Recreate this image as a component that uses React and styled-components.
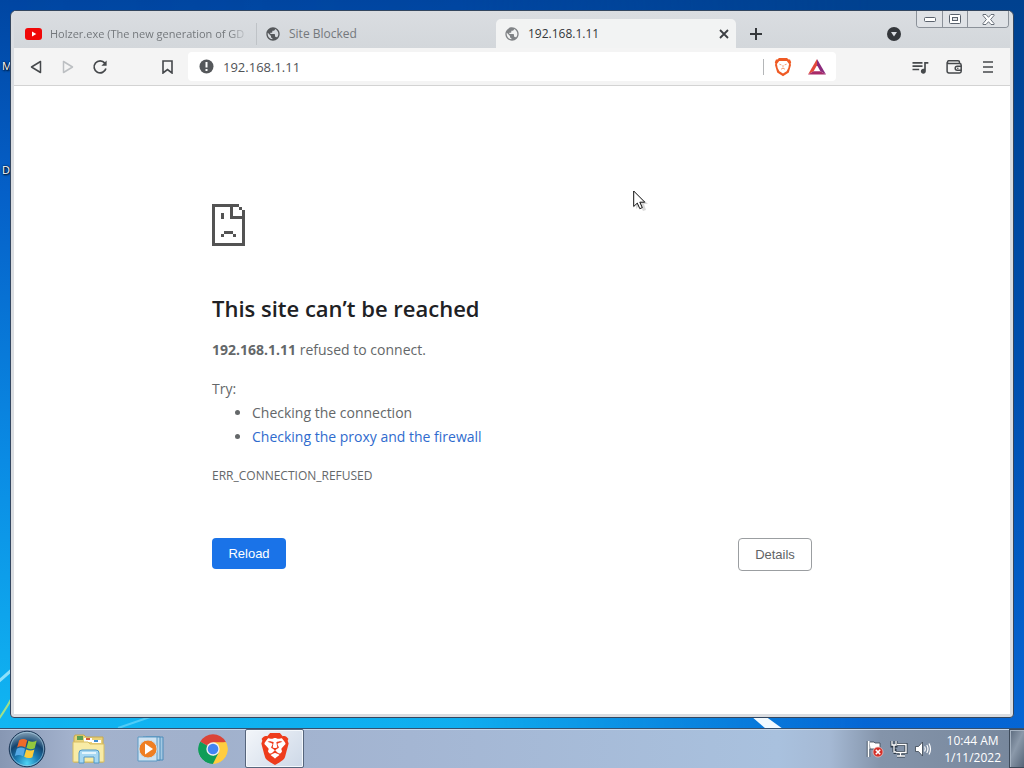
import React, { useState } from "react";
import styled, { createGlobalStyle } from "styled-components";
import { MdPublic, MdQueueMusic } from "react-icons/md";
import { SiBrave } from "react-icons/si";

const GlobalStyle = createGlobalStyle`
  * {
    box-sizing: border-box;
  }

  body {
    margin: 0;
    font-family: "Open Sans", "Noto Sans", sans-serif;
  }

  button,
  input {
    font: inherit;
  }
`;

// Desktop
const Desktop = styled.div`
  position: relative;
  display: flex;
  flex-direction: column;
  min-height: 100vh;
  overflow: hidden;
  background: #0050b4;
`;

const Wallpaper = styled.svg`
  position: absolute;
  inset: 0;
  width: 100%;
  height: 100%;
`;

const DesktopLabel = styled.span`
  position: absolute;
  left: 2px;
  top: ${({ $top }) => $top}px;
  color: #fff;
  font-size: 11px;
  line-height: 16px;
  text-shadow: 1px 1px 2px #000, 0 0 2px #000;
`;

const Stage = styled.div`
  position: relative;
  flex: 1;
  display: flex;
  padding: 10px;
`;

// Browser window
const Window = styled.div`
  flex: 1;
  min-width: 0;
  display: flex;
  flex-direction: column;
  padding: 0 3px 3px;
  border: 1px solid #33465f;
  border-radius: 6px 6px 4px 4px;
  background: #dadde1;
`;

const TabStrip = styled.div`
  display: flex;
  align-items: flex-end;
  height: 37px;
  padding-left: 3px;
  background: linear-gradient(#dadde1, #d3d7db);
`;

const Tab = styled.div`
  flex: 0 1 ${({ $active }) => ($active ? 240 : 239)}px;
  min-width: 0;
  display: flex;
  align-items: center;
  gap: 8px;
  height: 29px;
  padding: 0 7px 0 8px;
  border-radius: 5px 5px 0 0;
  background: ${({ $active }) => ($active ? "#f2f3f3" : "transparent")};
  color: ${({ $active }) => ($active ? "#333639" : "#74787c")};

  svg {
    flex: none;
  }
`;

const TabDivider = styled.span`
  width: 1px;
  height: 22px;
  margin-bottom: 3px;
  background: #bfc3c7;
`;

const TabTitle = styled.button`
  flex: 1;
  min-width: 0;
  padding: 0;
  border: 0;
  background: none;
  color: inherit;
  font-size: ${({ $fade }) => ($fade ? 11 : 12)}px;
  line-height: 18px;
  text-align: left;
  white-space: nowrap;
  overflow: hidden;
  mask-image: ${({ $fade }) =>
    $fade ? "linear-gradient(90deg, #000 90%, transparent)" : "none"};
`;

const IconButton = styled.button`
  flex: none;
  display: grid;
  place-items: center;
  width: ${({ $w }) => $w || 32}px;
  height: 28px;
  padding: 0;
  border: 0;
  background: none;
  color: ${({ $muted }) => ($muted ? "#bcbfc2" : "#45484b")};
`;

const Spacer = styled.div`
  flex: 1;
`;

const WindowControls = styled.div`
  flex: none;
  align-self: flex-start;
  display: flex;
  height: 17px;
  margin: 0 1px 0 6px;
  border: 1px solid #8b9199;
  border-top: 0;
  border-radius: 0 0 4px 4px;
`;

const ControlButton = styled.button`
  display: grid;
  place-items: center;
  width: ${({ $w }) => $w}px;
  height: 16px;
  padding: 0;
  border: 0;
  background: #dfe2e6;

  & + & {
    border-left: 1px solid #8b9199;
  }

  &:first-child {
    border-radius: 0 0 0 3px;
  }

  &:last-child {
    border-radius: 0 0 3px 0;
  }
`;

const Toolbar = styled.div`
  display: flex;
  align-items: center;
  height: 38px;
  padding: 0 5px 0 6px;
  border-bottom: 1px solid #d3d3d3;
  background: #f4f4f4;
`;

const BookmarkSlot = styled.div`
  margin: 0 5px 0 35px;
`;

const AddressBar = styled.form`
  flex: 1;
  min-width: 0;
  display: flex;
  align-items: center;
  height: 29px;
  padding: 0 2px 0 11px;
  border-radius: 4px;
  background: #fff;

  label {
    display: flex;
  }
`;

const AddressInput = styled.input`
  flex: 1;
  min-width: 0;
  padding: 0 9px;
  border: 0;
  outline: 0;
  background: none;
  color: #505356;
  font-size: 13px;
  line-height: 20px;
`;

const AddressDivider = styled.span`
  width: 1px;
  height: 16px;
  margin-right: 2px;
  background: #b4b6b8;
`;

const ToolbarEnd = styled.div`
  display: flex;
  margin-left: 67px;
`;

// Error page
const Page = styled.main`
  flex: 1;
  padding: 118px 24px 24px;
  background: #fff;
  color: #646769;
  font-size: 14px;
  line-height: 24px;
`;

const ErrorContent = styled.div`
  max-width: 600px;
  margin: 0 auto;

  > svg {
    display: block;
  }
`;

const Title = styled.h1`
  margin: 47px 0 15px;
  color: #202124;
  font-size: 22px;
  font-weight: 600;
  line-height: 30px;
`;

const Paragraph = styled.p`
  margin: 0 0 15px;
`;

const Suggestions = styled.div`
  ul {
    margin: 0;
    padding-left: 40px;
  }

  a {
    color: #2f6bce;
    text-decoration: none;
  }
`;

const ErrorCode = styled.div`
  margin-top: 18px;
  font-size: 12px;
  line-height: 18px;
`;

const Actions = styled.div`
  display: flex;
  align-items: flex-start;
  justify-content: space-between;
  margin-top: 53px;
`;

const ActionButton = styled.button`
  min-width: 74px;
  height: ${({ $primary }) => ($primary ? 31 : 33)}px;
  padding: 0 15px;
  border: ${({ $primary }) => ($primary ? "0" : "1px solid #9b9ea1")};
  border-radius: 4px;
  background: ${({ $primary }) => ($primary ? "#1a73e8" : "#fff")};
  color: ${({ $primary }) => ($primary ? "#fff" : "#606366")};
  font-family: "Liberation Sans", Arial, sans-serif;
  font-size: 13px;
`;

// Taskbar
const Taskbar = styled.footer`
  position: relative;
  display: flex;
  height: 40px;
  border-top: 1px solid #35506f;
  box-shadow: inset 0 1px 0 #c8d8ea;
  background: linear-gradient(
    90deg,
    #8797b3 0,
    #a3b2cd 7%,
    #a1b1cc 20%,
    #a4b6d3 40%,
    #a9c1de 76%,
    #a5b9d4 81%,
    #8494aa 86%,
    #76869b 100%
  );
`;

const StartButton = styled.button`
  width: 54px;
  margin-right: 5px;
  padding: 0;
  border: 0;
  background: none;

  svg {
    display: block;
    margin: 0 auto;
  }
`;

const TaskButtons = styled.div`
  flex: 1;
  display: flex;
  gap: 3px;
`;

const TaskButton = styled.button`
  display: grid;
  place-items: center;
  width: 59px;
  padding: 0;
  border: 1px solid ${({ $active }) => ($active ? "#56657c" : "transparent")};
  border-radius: 2px;
  background: ${({ $active }) =>
    $active ? "linear-gradient(135deg, #f3f6fa, #cdd8e7)" : "none"};
  box-shadow: ${({ $active }) => ($active ? "inset 0 0 0 1px #f4f8fc" : "none")};
`;

const Tray = styled.div`
  display: flex;
  align-items: center;
  gap: 1px;
`;

const TrayButton = styled(IconButton)`
  width: 23px;
`;

const Clock = styled.time`
  margin: 0 8px 0 9px;
  color: #fff;
  font-size: 12px;
  line-height: 17px;
  text-align: center;
`;

const ShowDesktop = styled.button`
  width: 15px;
  padding: 0;
  border: 1px solid #3d4a5a;
  border-right: 0;
  background: linear-gradient(115deg, #5b6a7d, #8b99aa 45%, #566578);
  box-shadow: inset 1px 1px 0 #a6b3c2;
`;

const Pointer = styled.svg`
  position: absolute;
  left: 633px;
  top: 190px;
  pointer-events: none;
`;

const DesktopBackground = () => (
  <Wallpaper viewBox="0 0 1024 768" preserveAspectRatio="none" aria-hidden="true">
    <defs>
      <linearGradient id="left" x1="0" y1="0" x2="0" y2="1">
        <stop offset="0" stopColor="#0046a2" />
        <stop offset=".25" stopColor="#0560c8" />
        <stop offset=".6" stopColor="#0a8be4" />
        <stop offset="1" stopColor="#12bdf4" />
      </linearGradient>
      <linearGradient id="right" x1="0" y1="0" x2="0" y2="1">
        <stop offset="0" stopColor="#00418f" />
        <stop offset=".5" stopColor="#0050b0" />
        <stop offset="1" stopColor="#0668d8" />
      </linearGradient>
      <linearGradient id="fade" x1="0" y1="0" x2="1" y2="0">
        <stop offset="0" stopColor="#fff" stopOpacity="0" />
        <stop offset=".45" stopColor="#fff" stopOpacity=".1" />
        <stop offset=".85" stopColor="#fff" />
      </linearGradient>
      <mask id="rightMask">
        <rect width="1024" height="768" fill="url(#fade)" />
      </mask>
    </defs>
    <rect width="1024" height="768" fill="url(#left)" />
    <rect width="1024" height="768" fill="url(#right)" mask="url(#rightMask)" />
    <path d="M-2 682L14 668" stroke="#8fe0fa" strokeWidth="3" />
    <path d="M-2 720Q8 706 14 694" stroke="#9fe08a" strokeWidth="2" fill="none" />
    <path d="M118 728L150 717" stroke="#4fccf8" strokeWidth="2" />
    <path d="M751 716h14l18 13h-17z" fill="#f2faff" />
  </Wallpaper>
);

const YoutubeIcon = () => (
  <svg width="17" height="12" viewBox="0 0 17 12">
    <rect width="17" height="12" rx="3" fill="#f00808" />
    <path d="M7 3.4v5.2L11.3 6z" fill="#fff" />
  </svg>
);

const CloseIcon = () => (
  <svg width="10" height="10" viewBox="0 0 10 10">
    <path d="M1 1l8 8M9 1L1 9" stroke="#3c3f43" strokeWidth="1.8" />
  </svg>
);

const ReloadIcon = () => (
  <svg width="16" height="16" viewBox="0 0 16 16" fill="none">
    <path d="M12.8 4.1A6 6 0 1 0 13.9 9.5" stroke="currentColor" strokeWidth="1.7" />
    <path d="M14.6 1.6v5.2H9.4z" fill="currentColor" />
  </svg>
);

const ShieldIcon = () => (
  <svg width="18" height="20" viewBox="0 0 18 20">
    <path
      d="M5 1h8l1.6 1.6 1.4-.1 1.2 2.8-.6 1.5.4 1.2-2.2 7.4L9 19.2l-5.8-3.8L1 8l.4-1.2-.6-1.5L2 2.5l1.4.1z"
      fill="#ef5a24"
    />
    <path
      d="M5.2 4h7.6l2.3 3-.8 4-1.7 3.2L9 16.6l-3.6-2.4L3.700 11l-.8-4z"
      fill="#fff"
    />
    <path
      d="M5.400 7.200l2 .7M12.600 7.200l-2 .7M9 8v2.400M7 12.200l2-1 2 1"
      stroke="#f5a27c"
      strokeWidth="1"
      fill="none"
    />
  </svg>
);

const RewardsIcon = () => (
  <svg width="18" height="16" viewBox="0 0 18 16">
    <path d="M9 0L0 15.5l5.6-3.3L9 6.2z" fill="#e3493b" />
    <path d="M9 0l9 15.5-5.6-3.3L9 6.2z" fill="#8b2a7c" />
    <path d="M0 15.5h18l-5.6-3.3H5.6z" fill="#a82a68" />
  </svg>
);

const WalletIcon = () => (
  <svg width="17" height="14" viewBox="0 0 17 14" fill="none">
    <path
      d="M13.500 3.500V2.300a1.500 1.500 0 0 0-1.500-1.500H2.500a1.400 1.400 0 0 0 0 2.700h11a1.700 1.700 0 0 1 1.700 1.700v6a1.700 1.700 0 0 1-1.700 1.700H2.800A1.700 1.700 0 0 1 1.100 11.200V2.200"
      stroke="currentColor"
      strokeWidth="1.500"
    />
    <path d="M15.200 6.200h-4a2 2 0 0 0 0 4h4" stroke="currentColor" strokeWidth="1.500" />
    <circle cx="11.800" cy="8.200" r=".8" fill="currentColor" />
  </svg>
);

const SadPageIcon = () => (
  <svg width="33" height="42" viewBox="0 0 11 14" shapeRendering="crispEdges" aria-hidden="true">
    <path
      d="M0 0h9v1H7v3h3V2h1v12H0zM1 1v12h9V5H6V1zM9 1h1v1H9zM3 3h1v2H3zM4 9h3v1H4zM3 10h1v1H3zM7 10h1v1H7z"
      fill="#535353"
      fillRule="evenodd"
    />
  </svg>
);

const StartOrb = () => (
  <svg width="38" height="38" viewBox="0 0 38 38">
    <defs>
      <radialGradient id="orb" cx=".5" cy=".9" r=".9">
        <stop offset="0" stopColor="#4fd4f4" />
        <stop offset=".35" stopColor="#1c7db4" />
        <stop offset=".65" stopColor="#13446f" />
        <stop offset="1" stopColor="#8ea9bd" />
      </radialGradient>
    </defs>
    <circle cx="19" cy="19" r="17.8" fill="url(#orb)" stroke="#1d3858" />
    <circle cx="19" cy="19" r="16.6" fill="none" stroke="#a9cfe4" strokeOpacity=".6" />
    <path d="M11.2 10.2q4-2.6 8 0l-1.9 7.4q-4.2-2.4-8.2-.2z" fill="#ee6a2a" />
    <path d="M20.4 10.8q4.2 2.2 8.3-.2l-2 7.6q-4.2 2-8.2-.2z" fill="#93c83e" />
    <path d="M8.8 18.8q4.2-2.4 8.2 0l-2 7.4q-4-2.2-8.2-.2z" fill="#55a9e6" />
    <path d="M18.2 19.4q4.2 2.2 8.2.2l-2 7.6q-4.2 2-8.2-.4z" fill="#fccb3a" />
  </svg>
);

const ExplorerIcon = () => (
  <svg width="34" height="32" viewBox="0 0 34 32">
    <path d="M2 4l1-2h9l2 2h17v25H2z" fill="#e9d27a" stroke="#c7a94e" />
    <path d="M5 3h6v4H5z" fill="#5c9f53" />
    <path d="M12 5h8v4h-8z" fill="#fff" />
    <path d="M14 5h4v2h-4z" fill="#d65b3c" />
    <path d="M20 7h9v3h-9z" fill="#fff" />
    <path d="M22 7h4v2h-4z" fill="#3f8ed0" />
    <path d="M1 9h15l2 2h14v18H1z" fill="#f8eba6" stroke="#d7bd62" />
    <path d="M7 30V20q0-3 3-3h14q3 0 3 3v10h-5v-6H12v6z" fill="#a7d8f2" stroke="#5098c8" />
    <path d="M10 20h14" stroke="#e3f5fd" strokeWidth="2" />
  </svg>
);

const MediaPlayerIcon = () => (
  <svg width="30" height="28" viewBox="0 0 30 28">
    <path d="M10 2h17v23H10z" fill="#a3c8e2" stroke="#4c8cba" />
    <path d="M7 2h17v23H7z" fill="#bddaee" stroke="#4c8cba" />
    <path d="M2 2h19v24H2z" fill="#cfe3f2" stroke="#5d9ac4" />
    <circle cx="12" cy="14" r="9" fill="#ef7f24" stroke="#c9dbe8" />
    <path d="M9 8.5v11l8-5.5z" fill="#fff" />
  </svg>
);

const ChromeIcon = () => (
  <svg width="32" height="32" viewBox="0 0 48 48">
    <path d="M24 24L4.95 13A22 22 0 0 1 43.05 13z" fill="#db4437" />
    <path d="M24 24V46A22 22 0 0 1 4.95 13z" fill="#0f9d58" />
    <path d="M24 24l19.05-11A22 22 0 0 1 24 46z" fill="#ffcd40" />
    <path d="M24 14h19.6L43 13H24z" fill="#db4437" />
    <path d="M24 14h19.5A22 22 0 0 1 24 46l8.7-17z" fill="#ffcd40" />
    <path d="M4.95 13l10.4 16L24 34l8.7-5L24 46A22 22 0 0 1 4.95 13z" fill="#0f9d58" />
    <circle cx="24" cy="24" r="10" fill="#f1f1f1" />
    <circle cx="24" cy="24" r="8" fill="#4285f4" />
  </svg>
);

const LionIcon = () => (
  <svg width="32" height="32" viewBox="0 0 32 32">
    <path d="M9 3h14l5 4-3 17-9 6-9-6L4 7z" fill="#fff" />
    <SiBrave x="0" y="0" size={32} color="#ee3c1c" />
  </svg>
);

const FlagIcon = () => (
  <svg width="18" height="18" viewBox="0 0 18 18">
    <path d="M3 2h5l1 1h5v7H9L8 9H4z" fill="#fff" stroke="#38434f" strokeWidth=".8" />
    <path d="M2.5 1v16" stroke="#fff" strokeWidth="2" />
    <path d="M1.2 1v16M3.8 9v8" stroke="#38434f" strokeWidth=".7" />
    <circle cx="12" cy="12" r="5" fill="#d42f28" stroke="#f4c9c5" strokeWidth=".7" />
    <path d="M9.8 9.8l4.4 4.4m0-4.4l-4.4 4.4" stroke="#fff" strokeWidth="1.6" />
  </svg>
);

const NetworkIcon = () => (
  <svg width="18" height="18" viewBox="0 0 18 18" fill="none">
    <path d="M6 4.5h10v8H5V9M10.5 13v3M7 16h8" stroke="#2d3a48" strokeWidth="3" />
    <path d="M2 1v5h4V1M4 6v6" stroke="#2d3a48" strokeWidth="3" />
    <path d="M7 4.5h9v8H6M10.5 13v3M7 16h8" stroke="#fff" strokeWidth="1.4" />
    <path d="M2 1v4h4V1M4 5v7h2" stroke="#fff" strokeWidth="1.3" />
  </svg>
);

const VolumeIcon = () => (
  <svg width="18" height="18" viewBox="0 0 18 18" fill="none">
    <path d="M1.5 6.5h3l4-4.5v14l-4-4.5h-3z" fill="#fff" stroke="#38434f" strokeWidth=".8" />
    <path
      d="M10.5 6.5q1.5 2.5 0 5M12.8 5q2.4 4 0 8M15 3.5q3 5.5 0 11"
      stroke="#fff"
      strokeWidth="1.2"
    />
  </svg>
);

const tabs = [
  { title: "Holzer.exe (The new generation of GD", icon: <YoutubeIcon />, fade: true },
  { title: "Site Blocked", icon: <MdPublic size={16} color="#55585b" /> },
  { title: "192.168.1.11", icon: <MdPublic size={16} color="#808386" />, active: true },
];

const taskItems = [
  { name: "Windows Explorer", icon: <ExplorerIcon /> },
  { name: "Windows Media Player", icon: <MediaPlayerIcon /> },
  { name: "Google Chrome", icon: <ChromeIcon /> },
  { name: "Brave", icon: <LionIcon />, active: true },
];

const BrowserTabs = () => (
  <TabStrip>
    {tabs.map((tab, index) => (
      <React.Fragment key={tab.title}>
        {index === 1 && <TabDivider />}
        <Tab $active={tab.active}>
          {tab.icon}
          <TabTitle $fade={tab.fade}>{tab.title}</TabTitle>
          {tab.active && (
            <IconButton $w={10} aria-label="Close tab">
              <CloseIcon />
            </IconButton>
          )}
        </Tab>
      </React.Fragment>
    ))}
    <IconButton $w={40} aria-label="New tab">
      <svg width="12" height="12" viewBox="0 0 12 12">
        <path d="M6 0v12M0 6h12" stroke="#35383b" strokeWidth="2" />
      </svg>
    </IconButton>
    <Spacer />
    <IconButton aria-label="Search tabs">
      <svg width="14" height="14" viewBox="0 0 14 14">
        <circle cx="7" cy="7" r="7" fill="#34373b" />
        <path d="M4 5h6L7 9.5z" fill="#dadde1" />
      </svg>
    </IconButton>
    <WindowControls>
      <ControlButton $w={25} aria-label="Minimize">
        <svg width="12" height="6" viewBox="0 0 12 6">
          <rect x=".5" y="1.5" width="11" height="4" rx="1" fill="#fff" stroke="#5a626d" />
        </svg>
      </ControlButton>
      <ControlButton $w={25} aria-label="Restore">
        <svg width="12" height="10" viewBox="0 0 12 10">
          <rect x=".5" y=".5" width="11" height="9" rx="1" fill="#fff" stroke="#5a626d" />
          <rect x="3.5" y="3.5" width="5" height="3" fill="#dfe2e6" stroke="#5a626d" />
        </svg>
      </ControlButton>
      <ControlButton $w={41} aria-label="Close">
        <svg width="13" height="11" viewBox="0 0 13 11">
          <path
            d="M1 .5h3l2.5 2.8L9 .5h3v1L8.6 5.5 12 9.5v1H9L6.5 7.7 4 10.5H1v-1l3.4-4L1 1.5z"
            fill="#fff"
            stroke="#5a626d"
            strokeWidth=".9"
          />
        </svg>
      </ControlButton>
    </WindowControls>
  </TabStrip>
);

const BrowserToolbar = () => {
  const [address, setAddress] = useState("192.168.1.11");

  return (
    <Toolbar>
      <IconButton aria-label="Back">
        <svg width="12" height="14" viewBox="0 0 12 14">
          <path
            d="M10.5 1.5v11L1.5 7z"
            fill="none"
            stroke="currentColor"
            strokeWidth="1.5"
            strokeLinejoin="round"
          />
        </svg>
      </IconButton>
      <IconButton $muted aria-label="Forward">
        <svg width="12" height="14" viewBox="0 0 12 14">
          <path
            d="M1.5 1.5v11l9-5.5z"
            fill="none"
            stroke="currentColor"
            strokeWidth="1.5"
            strokeLinejoin="round"
          />
        </svg>
      </IconButton>
      <IconButton aria-label="Reload page">
        <ReloadIcon />
      </IconButton>
      <BookmarkSlot>
        <IconButton aria-label="Bookmark this page">
          <svg width="11" height="14" viewBox="0 0 11 14">
            <path
              d="M1 1h9v12L5.5 9.5 1 13z"
              fill="none"
              stroke="currentColor"
              strokeWidth="1.6"
            />
          </svg>
        </IconButton>
      </BookmarkSlot>
      <AddressBar onSubmit={(e) => e.preventDefault()}>
        <label htmlFor="address" aria-label="Address">
          <svg width="15" height="15" viewBox="0 0 15 15">
            <circle cx="7.5" cy="7.5" r="7" fill="#55585b" />
            <path d="M7.5 3v5.5M7.5 10v2" stroke="#fff" strokeWidth="2" />
          </svg>
        </label>
        <AddressInput
          id="address"
          value={address}
          onChange={(e) => setAddress(e.target.value)}
        />
        <AddressDivider />
        <IconButton $w={34} type="button" aria-label="Brave Shields">
          <ShieldIcon />
        </IconButton>
        <IconButton $w={34} type="button" aria-label="Brave Rewards">
          <RewardsIcon />
        </IconButton>
      </AddressBar>
      <ToolbarEnd>
        <IconButton $w={34} aria-label="Media">
          <MdQueueMusic size={20} />
        </IconButton>
        <IconButton $w={34} aria-label="Wallet">
          <WalletIcon />
        </IconButton>
        <IconButton $w={34} aria-label="Menu">
          <svg width="10" height="12" viewBox="0 0 10 12">
            <path d="M0 1h10M0 6h10M0 11h10" stroke="currentColor" strokeWidth="1.5" />
          </svg>
        </IconButton>
      </ToolbarEnd>
    </Toolbar>
  );
};

const ErrorPage = () => (
  <Page>
    <ErrorContent>
      <SadPageIcon />
      <Title>This site can’t be reached</Title>
      <Paragraph>
        <strong>192.168.1.11</strong> refused to connect.
      </Paragraph>
      <Suggestions>
        Try:
        <ul>
          <li>Checking the connection</li>
          <li>
            <a href="#buttons">Checking the proxy and the firewall</a>
          </li>
        </ul>
      </Suggestions>
      <ErrorCode>ERR_CONNECTION_REFUSED</ErrorCode>
      <Actions id="buttons">
        <ActionButton $primary>Reload</ActionButton>
        <ActionButton>Details</ActionButton>
      </Actions>
    </ErrorContent>
  </Page>
);

const App = () => {
  return (
    <Desktop>
      <GlobalStyle />
      <DesktopBackground />
      <DesktopLabel $top={58}>M</DesktopLabel>
      <DesktopLabel $top={162}>D</DesktopLabel>
      <Stage>
        <Window>
          <BrowserTabs />
          <BrowserToolbar />
          <ErrorPage />
        </Window>
      </Stage>
      <Taskbar>
        <StartButton aria-label="Start">
          <StartOrb />
        </StartButton>
        <TaskButtons>
          {taskItems.map((item) => (
            <TaskButton key={item.name} $active={item.active} aria-label={item.name}>
              {item.icon}
            </TaskButton>
          ))}
        </TaskButtons>
        <Tray>
          <TrayButton aria-label="Action Center">
            <FlagIcon />
          </TrayButton>
          <TrayButton aria-label="Network">
            <NetworkIcon />
          </TrayButton>
          <TrayButton aria-label="Volume">
            <VolumeIcon />
          </TrayButton>
          <Clock dateTime="2022-01-11T10:44">
            10:44 AM
            <br />
            1/11/2022
          </Clock>
        </Tray>
        <ShowDesktop aria-label="Show desktop" />
      </Taskbar>
      <Pointer width="16" height="22" viewBox="0 0 16 22" aria-hidden="true">
        <path d="M3 3v16l4-4 3 6 3-1-2-6h4z" fill="#000" opacity=".15" />
        <path
          d="M.7 1v15.5l3.6-3.4 2.5 5.6 2.5-1.1-2.5-5.4h5z"
          fill="#fff"
          stroke="#111"
          strokeWidth="1"
        />
      </Pointer>
    </Desktop>
  );
};

export default App;
